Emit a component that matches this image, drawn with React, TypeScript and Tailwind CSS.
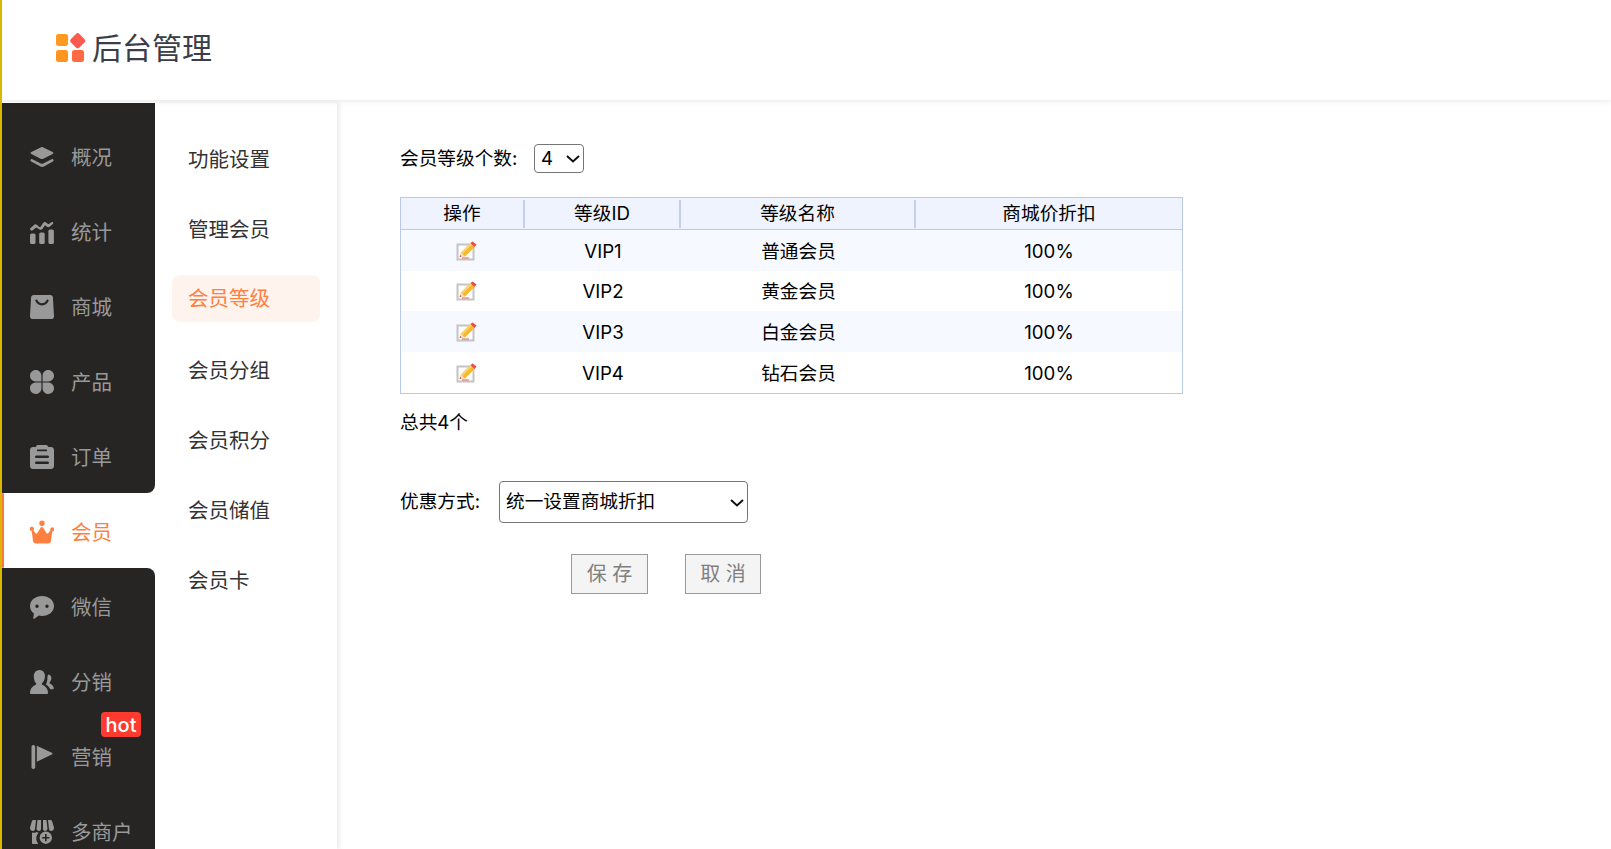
import React from "react";

const I = ({ children, vb = "0 0 24 24" }: { children: React.ReactNode; vb?: string }) => (
  <svg viewBox={vb} width={24} height={24} fill="currentColor" className="shrink-0">{children}</svg>
);

const icons: Record<string, React.ReactNode> = {
  layers: <I><path d="M12 2c.5 0 1 .1 1.400.4l9.200 4.600c1.100.6 1.100 1.500 0 2.100l-9.200 4.600c-.9.500-1.900.5-2.800 0L1.400 9.100c-1.100-.6-1.100-1.500 0-2.100l9.200-4.600c.4-.3.9-.4 1.400-.4z"/><path d="M.6 13.200c.4-.7 1.100-.8 1.800-.4l8.400 4.200c.8.400 1.600.4 2.400 0l8.400-4.200c.7-.4 1.400-.3 1.800.4.400.7.100 1.300-.6 1.700l-8.800 5.100c-1 .6-2.500.6-3.500 0L1.200 14.900c-.7-.4-1-1-.6-1.700z" transform="translate(0 1.500)"/></I>,
  stats: <I><path d="M.3 9.800c-.5-.7-.3-1.400.3-1.900l3.700-3.100c.9-.7 2-.6 2.800.1l2.200 2c.5.400 1 .4 1.300-.1l2.500-3.800c.7-1 1.900-1.200 2.900-.5l2 1.400c.4.300.8.200 1.200-.1l2.300-1.600c1-.8 2.400.5 1.500 1.500l-3 2.700c-.8.800-2 1-3 .3l-2-1.400-2.400 3.400c-.8 1.200-2.400 1.400-3.400.5L6.200 7.600 2.300 10.500c-.7.400-1.500 0-2-.7z"/><rect x="0" y="13.500" width="5.500" height="10.500" rx="1.600"/><rect x="9.200" y="12.400" width="5.500" height="11.600" rx="1.600"/><rect x="18.400" y="9.600" width="5.500" height="14.400" rx="1.600"/></I>,
  bag: <I><path fillRule="evenodd" d="M3.500 0h17c1.300 0 2.200 1 2.400 2.200L24 21c.1 1.600-1 3-2.600 3H2.600C1 24-.1 22.600 0 21L1.100 2.200C1.300 1 2.200 0 3.500 0zm2.600 4.600c-.7.200-1 .9-.7 1.500C6.600 8.800 9 10.400 12 10.400s5.400-1.600 6.600-4.300c.3-.6 0-1.300-.7-1.500-.6-.2-1.200.1-1.400.6-.9 1.900-2.600 3-4.500 3s-3.600-1.100-4.500-3c-.2-.5-.8-.8-1.400-.6z"/></I>,
  clover: <I><path d="M5.800 0C9 0 11.400 2.600 11.400 5.800v5.600H5.800C2.600 11.400 0 8.900 0 5.700S2.600 0 5.800 0zM18.200 0C21.400 0 24 2.600 24 5.700s-2.600 5.700-5.800 5.700h-5.600V5.800C12.600 2.600 15 0 18.200 0zM5.800 12.600h5.600v5.600c0 3.200-2.400 5.800-5.600 5.800S0 21.400 0 18.300s2.600-5.700 5.800-5.700zM12.600 12.600h5.600c3.200 0 5.800 2.500 5.800 5.700S21.400 24 18.200 24s-5.600-2.600-5.600-5.800z"/></I>,
  clip: <I><path fillRule="evenodd" d="M8 0h8c1.200 0 2 .9 2 2h3c1.700 0 3 1.300 3 3v16c0 1.700-1.300 3-3 3H3c-1.700 0-3-1.300-3-3V5c0-1.700 1.300-3 3-3h3c0-1.100.8-2 2-2zM7.500 4.500h9c.8 0 .8 1.800 0 1.800h-9c-.8 0-.8-1.800 0-1.800zM6.500 10.500c-.8 0-1.500.6-1.500 1.300s.7 1.300 1.500 1.300h11c.8 0 1.500-.6 1.500-1.300s-.7-1.300-1.500-1.300zm0 6c-.8 0-1.500.6-1.500 1.300s.7 1.300 1.500 1.300h11c.8 0 1.500-.6 1.500-1.300s-.7-1.300-1.500-1.300z"/></I>,
  crown: <I><path d="M12 .5a2.700 2.700 0 1 1 0 5.400 2.700 2.700 0 0 1 0-5.400zM1.800 6.800a2 2 0 0 1 1.500 3.500l2.300 3c.5.600 1.200.5 1.600-.1l3.600-5.800c.5-.7 1.700-.7 2.200 0l3.600 5.800c.4.600 1.100.7 1.600.1l2.300-3a2 2 0 1 1 1.800 1.100L21 20.700c-.1 1.800-1.300 2.800-3 2.800H6c-1.700 0-2.900-1-3-2.800L1.700 11a2.100 2.100 0 0 1 .1-4.200z"/></I>,
  chat: <I><path fillRule="evenodd" d="M12 1c6.600 0 12 4.300 12 10s-5.400 10-12 10c-1.100 0-2.200-.1-3.200-.4L4.400 23.700c-.6.400-1.200 0-1.100-.7l.6-4.400C1.500 16.700 0 14 0 11 0 5.300 5.400 1 12 1zM7 9.500a1.700 1.700 0 1 0 0 3.400 1.700 1.700 0 0 0 0-3.400zm10 0a1.700 1.700 0 1 0 0 3.400 1.700 1.700 0 0 0 0-3.400z"/></I>,
  users: <I><path d="M9.500 0c3.400 0 5.500 2.800 5.500 6s-1.400 5.700-3 7.300c-.6.600-.2 1.300.6 1.700 2.300 1 4.100 2.500 4.800 4.800.4 1.200.6 2.400.6 3.400 0 .5-.4.800-.9.800H.9c-.5 0-.9-.3-.9-.8 0-1 .2-2.200.6-3.400.7-2.300 2.500-3.800 4.800-4.800.8-.4 1.200-1.100.6-1.700C4.400 11.700 3.800 8.800 3.800 6 3.800 2.800 6.100 0 9.500 0z"/><path d="M18.300 4.500c2.300.4 3.400 2.400 3 4.500-.3 1.500-1 2.600-1.700 3.400-.3.400-.1.800.3 1 2 .9 3.300 2.300 3.900 4.700.2.700-.3 1.200-1 1.200h-2.500c-.8-2-2.200-3.700-4.400-4.900.9-1.500 1.300-3.300 1.500-5.400.1-1.700-.1-3.100.9-4.500z"/></I>,
  flag: <I><rect x="1.500" y="0" width="3.700" height="24" rx="1.800"/><path d="M6.800 0.800 21.800 7.800c1 .5 1 1.300 0 1.800L6.800 16.800z"/></I>,
  store: <I><path fillRule="evenodd" d="M3.500 0H6L5 9.300C4.700 10.300 4 11 3 11 1 11 -.2 9.400 0 7.500L2 1C2.200.4 2.800 0 3.500 0zM7.500 0H11V9C11 10.200 10 11 9 11S6.700 10.200 6.500 9zM13 0h3.500l1 9c-.2 1.200-1.500 2-2.500 2s-2-.8-2-2zM18 0h2.500c.7 0 1.300.4 1.500 1l2 6.500C24.200 9.400 23 11 21 11c-1 0-1.700-.7-2-1.700zM2 12.500c.5.200 1 .3 1.500.3 1.100 0 2.100-.3 3-.9.700.5 1.400.8 2.200.9C7.200 14.300 6.300 16.300 6.300 18.500c0 2 .8 3.800 2 5.500H3c-.6 0-1-.4-1-1z"/><path fillRule="evenodd" d="M15.800 11.500a6.200 6.200 0 1 1 0 12.400 6.200 6.200 0 0 1 0-12.400zm-.8 2.600v2.800h-2.800v1.600H15v2.800h1.600v-2.800h2.800v-1.600h-2.800v-2.800z"/></I>,
};

const NavItem = ({ icon, label, active, hot }: { icon: string; label: string; active?: boolean; hot?: boolean }) => (
  <div className={`relative flex h-[75px] shrink-0 items-center pl-[28px] pt-[2px] ${active ? "bg-white text-[#ff7f41]" : "text-[#999999]"}`}>
    {active && <span className="absolute left-0 top-0 h-full w-[2px] rounded-[2px] bg-[#ff7441]" />}
    {icons[icon]}
    <span className="ml-[17px] pt-[3px] text-[20.500px] leading-none">{label}</span>
    {hot && <span className="absolute left-[99px] top-[-6px] flex h-[25px] w-[40px] items-center justify-center rounded-[4px] bg-[#ff3b30] text-[20px] font-medium leading-none text-white">hot</span>}
  </div>
);

const SubItem = ({ label, active }: { label: string; active?: boolean }) => (
  <div className={`flex h-[47px] items-center rounded-[8px] pl-[16px] pt-[2px] text-[20.500px] ${active ? "mb-[25px] mt-[-1px] bg-[#fff3ee] text-[#ff7f41]" : "mb-[23px] text-[#333333]"}`}>{label}</div>
);

const Pencil = () => (
  <svg width={22} height={20} viewBox="0 0 22 20" className="mx-auto block translate-x-[4px]">
    <rect x="1.500" y="3.500" width="16" height="15" fill="#fdfdfd" stroke="#c4c4c4" strokeWidth="2" />
    <path d="M4 15 5 11.500 14.500 2 18.500 6 9 15.500z" fill="#f5b82e" />
    <path d="M5 11.500 14.500 2l1.500 1.500L6.500 13z" fill="#fad46b" />
    <path d="M14.500 2 16.500 0.500 20.500 3.500 18.500 6z" fill="#ee4a3e" />
    <path d="M4 15.500 5 11.500 9 15.500z" fill="#f4dcc0" />
    <path d="M3.500 16 4.300 14 5.500 15.500z" fill="#c0392b" />
    <path d="M6 17h7" stroke="#d66a5e" strokeWidth="1" />
  </svg>
);

const Chevron = ({ className }: { className: string }) => (
  <svg width={14} height={8} viewBox="0 0 14 8" className={`pointer-events-none absolute ${className}`}>
    <path d="M1 1l6 5.500L13 1" fill="none" stroke="#111111" strokeWidth="2" />
  </svg>
);

const rows = [
  ["VIP1", "普通会员", "h-[41px] bg-[#f6f9ff]"],
  ["VIP2", "黄金会员", "h-[40px] bg-white"],
  ["VIP3", "白金会员", "h-[41px] bg-[#f6f9ff]"],
  ["VIP4", "钻石会员", "h-[41px] bg-white"],
];

const Th = ({ children, w, last }: { children: React.ReactNode; w: string; last?: boolean }) => (
  <th className={`${w} h-[32px] border-b border-[#b9c9ec] p-0 font-normal`}>
    <div className={`flex h-[28px] items-center justify-center ${last ? "" : "border-r-2 border-[#c3d0ec]"}`}>{children}</div>
  </th>
);

export default function App() {
  return (
    <div className="flex h-screen flex-col overflow-hidden border-l-2 border-[#d9b800] bg-white text-[18.670px] text-black [font-family:Inter,'Noto_Sans_CJK_SC',sans-serif]">
      <header className="relative z-20 flex h-[100px] shrink-0 items-center bg-white pl-[54px] shadow-[0_1px_6px_rgba(0,0,0,0.1)]">
        <svg width={30} height={30} viewBox="0 0 30 30" className="mt-[-7px]">
          <rect x="0" y="2" width="12" height="12" rx="2.500" fill="#ff9a20" />
          <rect x="0" y="18" width="12" height="12" rx="2.500" fill="#ff951f" />
          <rect x="16" y="18" width="12" height="12" rx="2.500" fill="#ff6a45" />
          <rect x="15.700" y="2.700" width="12" height="12" rx="2.500" fill="#ff5a4e" transform="rotate(45 21.700 8.700)" />
        </svg>
        <span className="ml-[6px] mt-[-4px] text-[30px] leading-none text-[#3a3e4a]">后台管理</span>
      </header>
      <div className="flex min-h-0 flex-1 pt-[3px]">
        <aside className="flex w-[153px] shrink-0 flex-col">
          <div className="shrink-0 rounded-br-[8px] bg-[#262524] pt-[15px]">
            <NavItem icon="layers" label="概况" />
            <NavItem icon="stats" label="统计" />
            <NavItem icon="bag" label="商城" />
            <NavItem icon="clover" label="产品" />
            <NavItem icon="clip" label="订单" />
          </div>
          <NavItem icon="crown" label="会员" active />
          <div className="shrink-0 flex-1 rounded-tr-[8px] bg-[#262524]">
            <NavItem icon="chat" label="微信" />
            <NavItem icon="users" label="分销" />
            <NavItem icon="flag" label="营销" hot />
            <NavItem icon="store" label="多商户" />
          </div>
        </aside>
        <nav className="relative z-10 w-[182px] shrink-0 bg-white px-[17px] pt-[33px] shadow-[3px_0_4px_rgba(0,0,0,0.07)]">
          <SubItem label="功能设置" />
          <SubItem label="管理会员" />
          <SubItem label="会员等级" active />
          <SubItem label="会员分组" />
          <SubItem label="会员积分" />
          <SubItem label="会员储值" />
          <SubItem label="会员卡" />
        </nav>
        <main className="flex-1 pl-[63px] pt-[41px]">
          <div className="flex h-[29px] items-center">
            <span className="w-[134px]">会员等级个数:</span>
            <div className="relative">
              <select defaultValue="4" className="block h-[29px] w-[50px] appearance-none rounded-[4px] border border-[#767676] pl-[6px] text-[18.670px]">
                <option>4</option>
              </select>
              <Chevron className="left-[32px] top-[11px]" />
            </div>
          </div>
          <table className="mt-[24px] w-[783px] table-fixed border-separate border-spacing-0 border border-[#b9c9ec] text-center">
            <thead className="bg-[#eff3fd]">
              <tr>
                <Th w="w-[124px]">操作</Th>
                <Th w="w-[156px]">等级ID</Th>
                <Th w="w-[235px]">等级名称</Th>
                <Th w="w-[266px]" last>商城价折扣</Th>
              </tr>
            </thead>
            <tbody>
              {rows.map(([id, name, cls]) => (
                <tr key={id} className={cls}>
                  <td className="p-0"><Pencil /></td>
                  <td className="p-0 pt-[2px]">{id}</td>
                  <td className="p-0 pt-[2px]">{name}</td>
                  <td className="p-0 pt-[2px]">100%</td>
                </tr>
              ))}
            </tbody>
          </table>
          <p className="mt-[15px] leading-[27px]">总共4个</p>
          <div className="mt-[45px] flex h-[42px] items-center">
            <span className="w-[99px]">优惠方式:</span>
            <div className="relative">
              <select className="block h-[42px] w-[249px] appearance-none rounded-[4px] border border-[#767676] pl-[6px] text-[18.670px]">
                <option>统一设置商城折扣</option>
              </select>
              <Chevron className="left-[231px] top-[18px]" />
            </div>
          </div>
          <div className="ml-[171px] mt-[31px] flex gap-[37px]">
            <button className="h-[40px] w-[77px] border border-[#999999] bg-[#f4f4f4] text-[20px] leading-none text-[#808080]">保 存</button>
            <button className="h-[40px] w-[76px] border border-[#999999] bg-[#f4f4f4] text-[20px] leading-none text-[#808080]">取 消</button>
          </div>
        </main>
      </div>
    </div>
  );
}
